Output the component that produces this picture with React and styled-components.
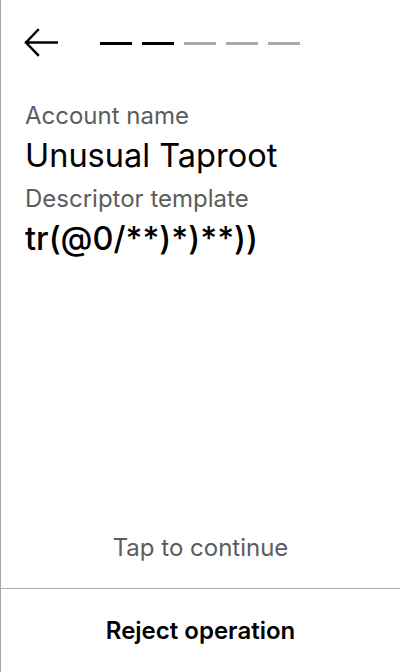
import React from "react";
import styled, { createGlobalStyle } from "styled-components";

const Global = createGlobalStyle`
  html, body { margin: 0; padding: 0; background: #fff; }
  body { font-family: Inter, "Noto Sans", sans-serif; }
  * { box-sizing: border-box; }
`;

const Screen = styled.div`
  width: 400px;
  height: 672px;
  display: flex;
  flex-direction: column;
  border-left: 1px solid #a8a8a8;
  background: #fff;
  color: #000;
`;

const Header = styled.div`
  display: flex;
  align-items: center;
  height: 86px;
  padding: 0 0 0 23px;
  gap: 42px;
`;

const BackButton = styled.button`
  border: 0;
  background: none;
  padding: 0;
  width: 34px;
  height: 30px;
  display: flex;
  align-items: center;
  cursor: pointer;
`;

const Steps = styled.div`
  display: flex;
  gap: 10px;
`;

const Step = styled.div`
  width: 32px;
  height: 3px;
  background: ${(p) => (p.$done ? "#000" : "#aaaaaa")};
`;

const Content = styled.div`
  flex: 1;
  display: flex;
  flex-direction: column;
  padding: 12px 24px 0;
`;

const Label = styled.div`
  font-size: 24px;
  line-height: 35px;
  color: #5c5c5c;
`;

const Value = styled.div`
  font-size: 32.5px;
  line-height: 45px;
  margin-bottom: 3px;
  font-weight: ${(p) => p.$weight || 400};
  color: #000;
`;

const Tap = styled.div`
  text-align: center;
  font-size: 24px;
  color: #5c5c5c;
  padding-bottom: 26px;
`;

const Footer = styled.button`
  border: 0;
  border-top: 1px solid #aaaaaa;
  background: none;
  height: 84px;
  font-family: Inter, "Noto Sans", sans-serif;
  font-size: 24px;
  font-weight: 600;
  color: #000;
  cursor: pointer;
`;

const Arrow = () => (
  <svg width="34" height="30" viewBox="0 0 34 30" fill="none">
    <path d="M2 14.5 H33 M14 2 L2 14.5 L14 27" stroke="#000" strokeWidth="2.4" strokeLinecap="square" />
  </svg>
);

export default function App() {
  const steps = [true, true, false, false, false];
  return (
    <>
      <Global />
      <Screen>
        <Header>
          <BackButton aria-label="Back">
            <Arrow />
          </BackButton>
          <Steps>
            {steps.map((d, i) => (
              <Step key={i} $done={d} />
            ))}
          </Steps>
        </Header>
        <Content>
          <Label>Account name</Label>
          <Value>Unusual Taproot</Value>
          <Label>Descriptor template</Label>
          <Value $weight={500}>tr(@0/**)*)**))</Value>
        </Content>
        <Tap>Tap to continue</Tap>
        <Footer>Reject operation</Footer>
      </Screen>
    </>
  );
}
